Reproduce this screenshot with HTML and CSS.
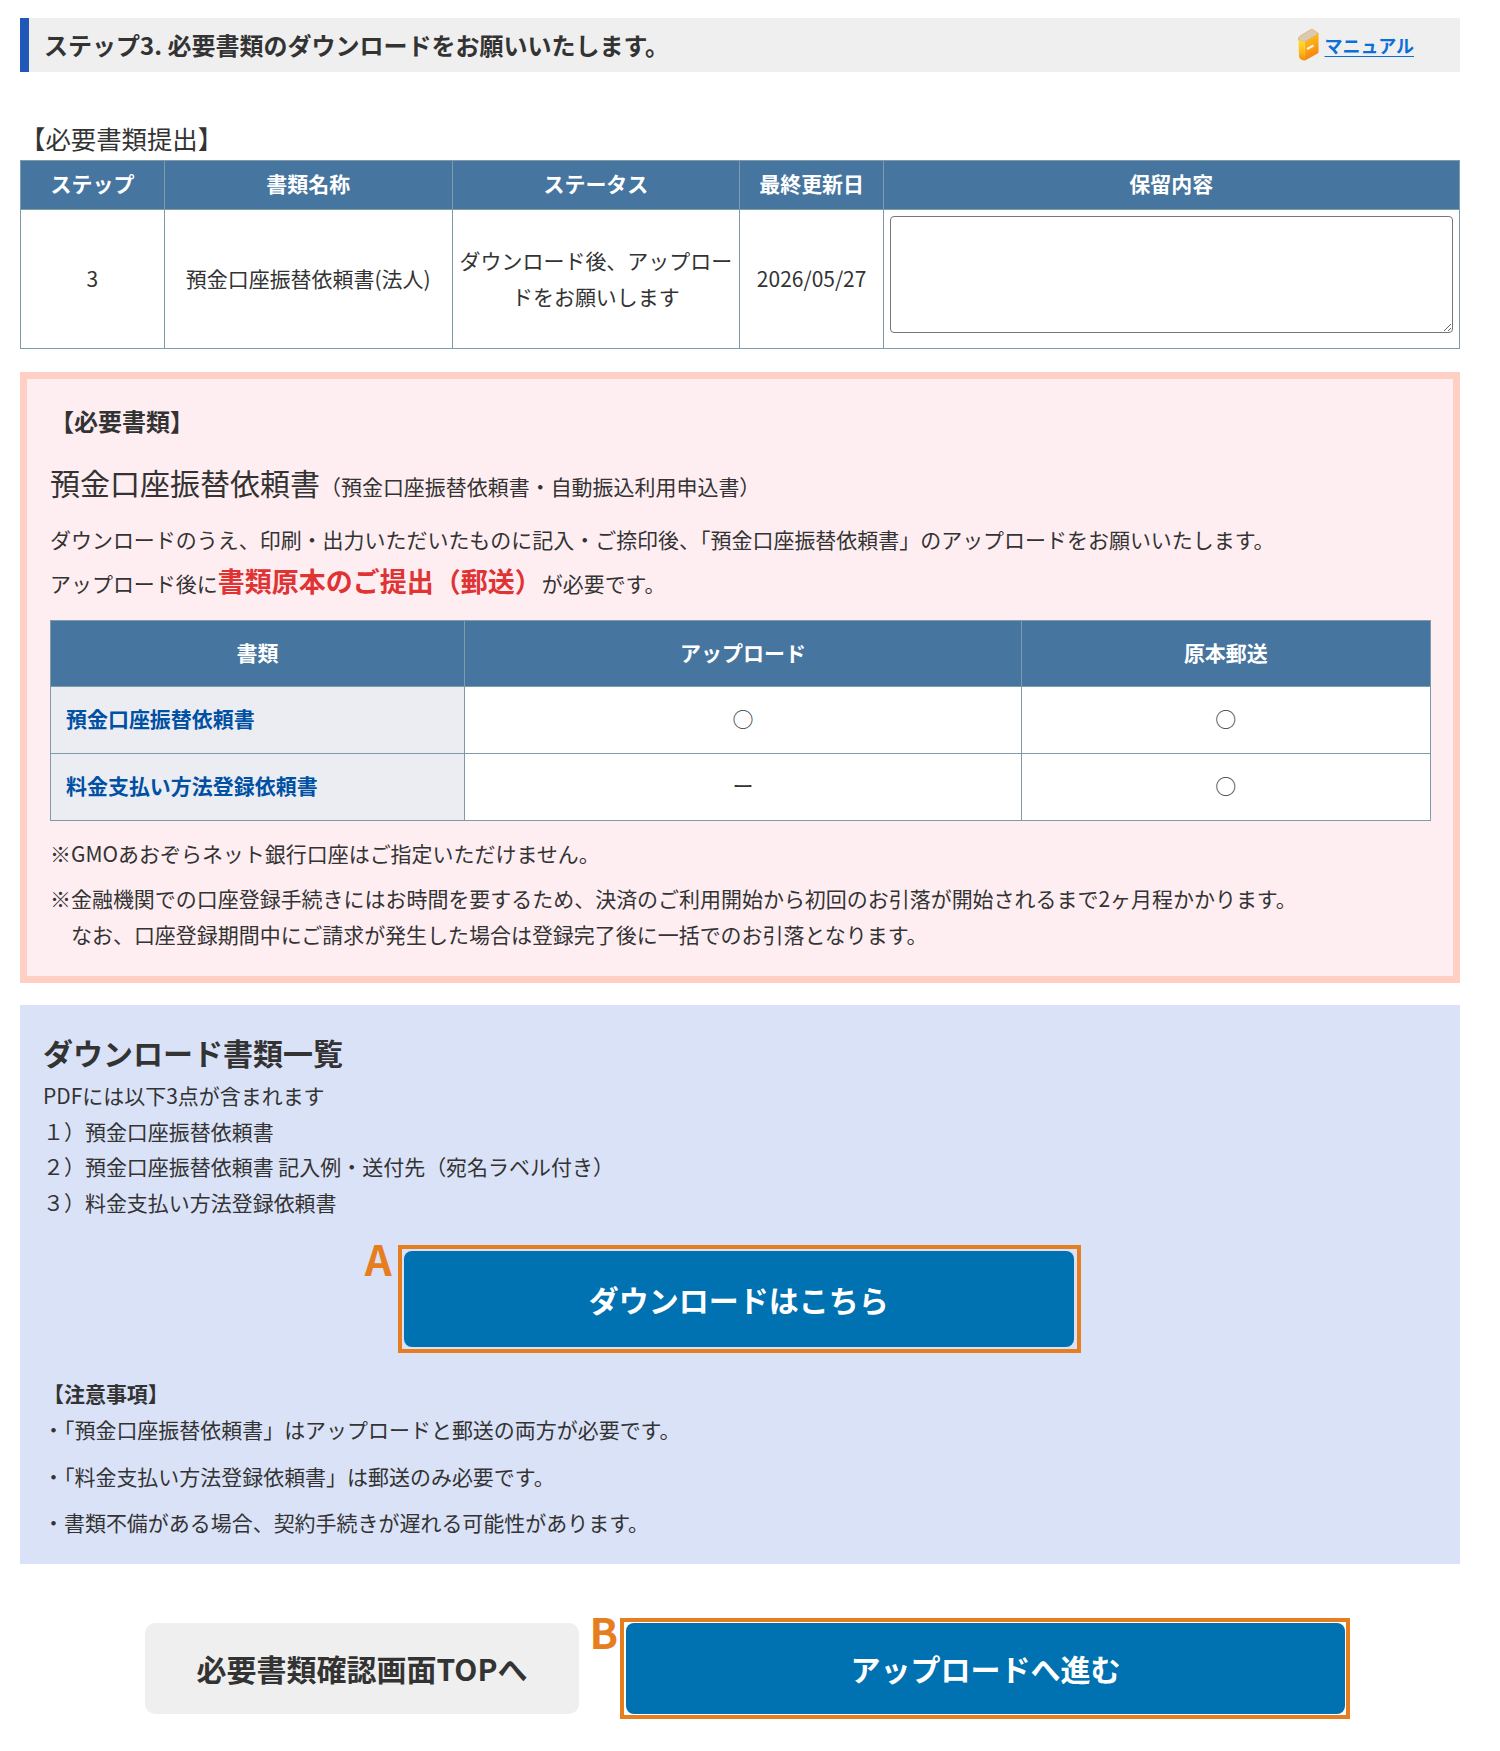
FILE: index.html
```html
<!DOCTYPE html>
<html lang="ja">
<head>
<meta charset="utf-8">
<title>必要書類のダウンロード</title>
<link rel="stylesheet" href="styles.css">
</head>
<body>
<main class="page">
  <div class="step-bar">
    <h2 class="step-title">ステップ3. 必要書類のダウンロードをお願いいたします。</h2>
    <a class="manual" href="#">
      <svg class="manual-icon" viewBox="0 0 21 32" width="21" height="32" aria-hidden="true">
        <defs>
          <linearGradient id="bookFace" x1="0" y1="0" x2="0.3" y2="1">
            <stop offset="0" stop-color="#ffc21e"/>
            <stop offset="0.55" stop-color="#fba716"/>
            <stop offset="1" stop-color="#f4800e"/>
          </linearGradient>
          <linearGradient id="bookSpine" x1="0" y1="0" x2="0" y2="1">
            <stop offset="0" stop-color="#ffe02a"/>
            <stop offset="0.6" stop-color="#ffb81a"/>
            <stop offset="1" stop-color="#f08a10"/>
          </linearGradient>
        </defs>
        <path d="M0.5 11 Q0 8.5 2 7 L13 0.5 Q14.5 0 15.5 1 L20.5 4.5 L6.5 13 Z" fill="#d9cbb3" stroke="#e8a040" stroke-width="0.6"/>
        <path d="M6.5 13 L20.5 4.5 L20.5 23 Q20.5 24 19.5 24.6 L7 31.6 Z" fill="url(#bookFace)"/>
        <path d="M0.5 11 L6.5 13 L7 31.6 Q2 31 1 28 Z" fill="url(#bookSpine)"/>
        <path d="M9 20 L15.5 16.5" stroke="#fff4e0" stroke-width="2"/>
      </svg>
      <span class="manual-text">マニュアル</span>
    </a>
  </div>

  <h3 class="section-title">【必要書類提出】</h3>
  <table class="data-table status-table">
    <thead>
      <tr>
        <th class="col-10">ステップ</th>
        <th class="col-20">書類名称</th>
        <th class="col-20">ステータス</th>
        <th class="col-10">最終更新日</th>
        <th class="col-40">保留内容</th>
      </tr>
    </thead>
    <tbody>
      <tr>
        <td>3</td>
        <td>預金口座振替依頼書(法人)</td>
        <td>ダウンロード後、アップロードをお願いします</td>
        <td>2026/05/27</td>
        <td class="remark-cell"><textarea class="remark"></textarea></td>
      </tr>
    </tbody>
  </table>

  <section class="required">
    <p class="required-label">【必要書類】</p>
    <p class="doc-name">預金口座振替依頼書<span class="doc-sub">（預金口座振替依頼書・自動振込利用申込書）</span></p>
    <p class="lead">ダウンロードのうえ、印刷・出力いただいたものに記入・ご捺印後、「預金口座振替依頼書」のアップロードをお願いいたします。</p>
    <p class="lead lead-second">アップロード後に<strong class="alert">書類原本のご提出（郵送）</strong>が必要です。</p>
    <table class="data-table doc-table">
      <thead>
        <tr>
          <th class="doc-col-a">書類</th>
          <th class="doc-col-b">アップロード</th>
          <th class="doc-col-c">原本郵送</th>
        </tr>
      </thead>
      <tbody>
        <tr>
          <th class="row-label">預金口座振替依頼書</th>
          <td>○</td>
          <td>○</td>
        </tr>
        <tr>
          <th class="row-label">料金支払い方法登録依頼書</th>
          <td>ー</td>
          <td>○</td>
        </tr>
      </tbody>
    </table>
    <p class="note note-first">※GMOあおぞらネット銀行口座はご指定いただけません。</p>
    <p class="note note-second">※金融機関での口座登録手続きにはお時間を要するため、決済のご利用開始から初回のお引落が開始されるまで2ヶ月程かかります。<br><span class="note-indent">なお、口座登録期間中にご請求が発生した場合は登録完了後に一括でのお引落となります。</span></p>
  </section>

  <section class="download">
    <h3 class="download-title">ダウンロード書類一覧</h3>
    <p class="line">PDFには以下3点が含まれます</p>
    <p class="line">１）預金口座振替依頼書</p>
    <p class="line">２）預金口座振替依頼書 記入例・送付先（宛名ラベル付き）</p>
    <p class="line">３）料金支払い方法登録依頼書</p>
    <div class="mark mark-a">
      <span class="mark-letter">A</span>
      <a class="btn btn-primary btn-a" href="#">ダウンロードはこちら</a>
    </div>
    <p class="line line-bold caution-title">【注意事項】</p>
    <p class="line">・「預金口座振替依頼書」はアップロードと郵送の両方が必要です。</p>
    <p class="line caution-gap">・「料金支払い方法登録依頼書」は郵送のみ必要です。</p>
    <p class="line caution-gap">・書類不備がある場合、契約手続きが遅れる可能性があります。</p>
  </section>

  <div class="actions">
    <a class="btn btn-back" href="#">必要書類確認画面TOPへ</a>
    <div class="mark mark-b">
      <span class="mark-letter">B</span>
      <a class="btn btn-primary btn-b" href="#">アップロードへ進む</a>
    </div>
  </div>
</main>
</body>
</html>
```
FILE: styles.css
```css
* { box-sizing: border-box; }

html, body { margin: 0; padding: 0; background: #fff; }

body {
  font-family: "Noto Sans CJK JP", "Noto Sans", sans-serif;
  font-size: 20.98px;
  line-height: 35.8px;
  color: #333;
}

p, h2, h3 { margin: 0; }

.page { padding: 18px 40.5px 33px 20px; }

/* step bar */
.step-bar {
  display: flex;
  align-items: center;
  justify-content: space-between;
  height: 54px;
  background: #efefef;
  border-left: 9px solid #2158b8;
  padding: 0 45.5px 0 15px;
}
.step-title { font-size: 24px; font-weight: 700; line-height: 54px; }
.manual { display: flex; align-items: center; gap: 6px; color: #0b6fd8; text-decoration: none; }
.manual-icon { display: block; }
.manual-text { font-size: 18px; font-weight: 700; line-height: 24px; text-decoration: underline; text-underline-offset: 3px; }

.section-title { font-size: 25.4px; font-weight: 400; line-height: 36px; margin-top: 48px; }

/* tables */
.data-table { width: 100%; border-collapse: collapse; table-layout: fixed; background: #fff; }
.data-table th, .data-table td { border: 1px solid #7e9ca8; text-align: center; vertical-align: middle; font-size: 20.98px; }
.data-table thead th { background: #46759f; color: #fff; font-weight: 700; }

.status-table { margin-top: 4px; }
.status-table thead th { height: 49px; padding: 0 6px 2px; }
.status-table tbody td { height: 139px; padding: 6px 6px 7px; }
.col-10 { width: 10%; }
.col-20 { width: 20%; }
.col-40 { width: 40%; }
.status-table .remark-cell { vertical-align: top; padding: 6px; }
.remark {
  display: block;
  width: 100%;
  height: 117px;
  border: 1px solid #767676;
  border-radius: 4px;
  background: #fff;
  padding: 2px;
  margin: 0;
  font: inherit;
}

/* required documents */
.required {
  margin-top: 23px;
  border: 7px solid #ffcfc4;
  background: #feeef2;
  padding: 24px 22px 23px 23px;
}
.required-label { font-size: 24px; font-weight: 700; }
.doc-name { font-size: 30px; line-height: 52px; margin-top: 17px; }
.doc-sub { font-size: 20.98px; }
.lead { margin-top: 10px; }
.lead-second { margin-top: 5.5px; }
.alert { font-size: 27px; color: #df3334; font-weight: 700; }

.doc-table { margin-top: 18.5px; }
.doc-table thead th { height: 66px; padding-bottom: 2px; }
.doc-table tbody td, .doc-table .row-label { height: 67px; padding-bottom: 3px; }
.doc-col-a { width: 30%; }
.doc-col-b { width: 40.4%; }
.doc-col-c { width: 29.6%; }
.data-table .row-label { background: #ecedf2; color: #0050a4; font-weight: 700; text-align: left; padding-left: 15px; padding-right: 14px; }

.note-first { margin-top: 15px; }
.note-second { margin-top: 9px; }
.note-indent { padding-left: 21px; }

/* download block */
.download {
  margin-top: 22px;
  background: #dae2f7;
  padding: 22px 24px 23px 23px;
}
.download-title { font-size: 30px; font-weight: 700; line-height: 51px; }
.line-bold { font-weight: 700; }
.caution-title { margin-top: 23px; }
.caution-gap { margin-top: 11px; }

/* annotated buttons */
.mark {
  position: relative;
  border: 4px solid #e67e1f;
  padding: 2px;
}
.mark-letter {
  position: absolute;
  right: 100%;
  font-size: 42px;
  line-height: 42px;
  font-weight: 700;
  color: #e67e1f;
}
.mark-a { width: 683px; margin: 24px auto 0 auto; padding-right: 3px; }
.mark-a .mark-letter { top: -12px; margin-right: 10px; }
.mark-b { width: 730px; margin-left: 41px; padding: 1px 1px 1px 2px; }
.mark-b .mark-letter { top: -12px; margin-right: 6px; }

.btn {
  display: flex;
  align-items: center;
  justify-content: center;
  font-size: 30px;
  font-weight: 700;
  text-decoration: none;
  border-radius: 8px;
}
.btn-primary { background: #0071b1; color: #fff; }
.btn-a { height: 96px; padding-top: 2px; }
.btn-b { height: 91px; }

.actions {
  display: flex;
  align-items: center;
  margin-top: 54px;
  padding-left: 125px;
}
.btn-back { width: 434px; height: 91px; background: #efefef; color: #333; border-radius: 10px; }
```
